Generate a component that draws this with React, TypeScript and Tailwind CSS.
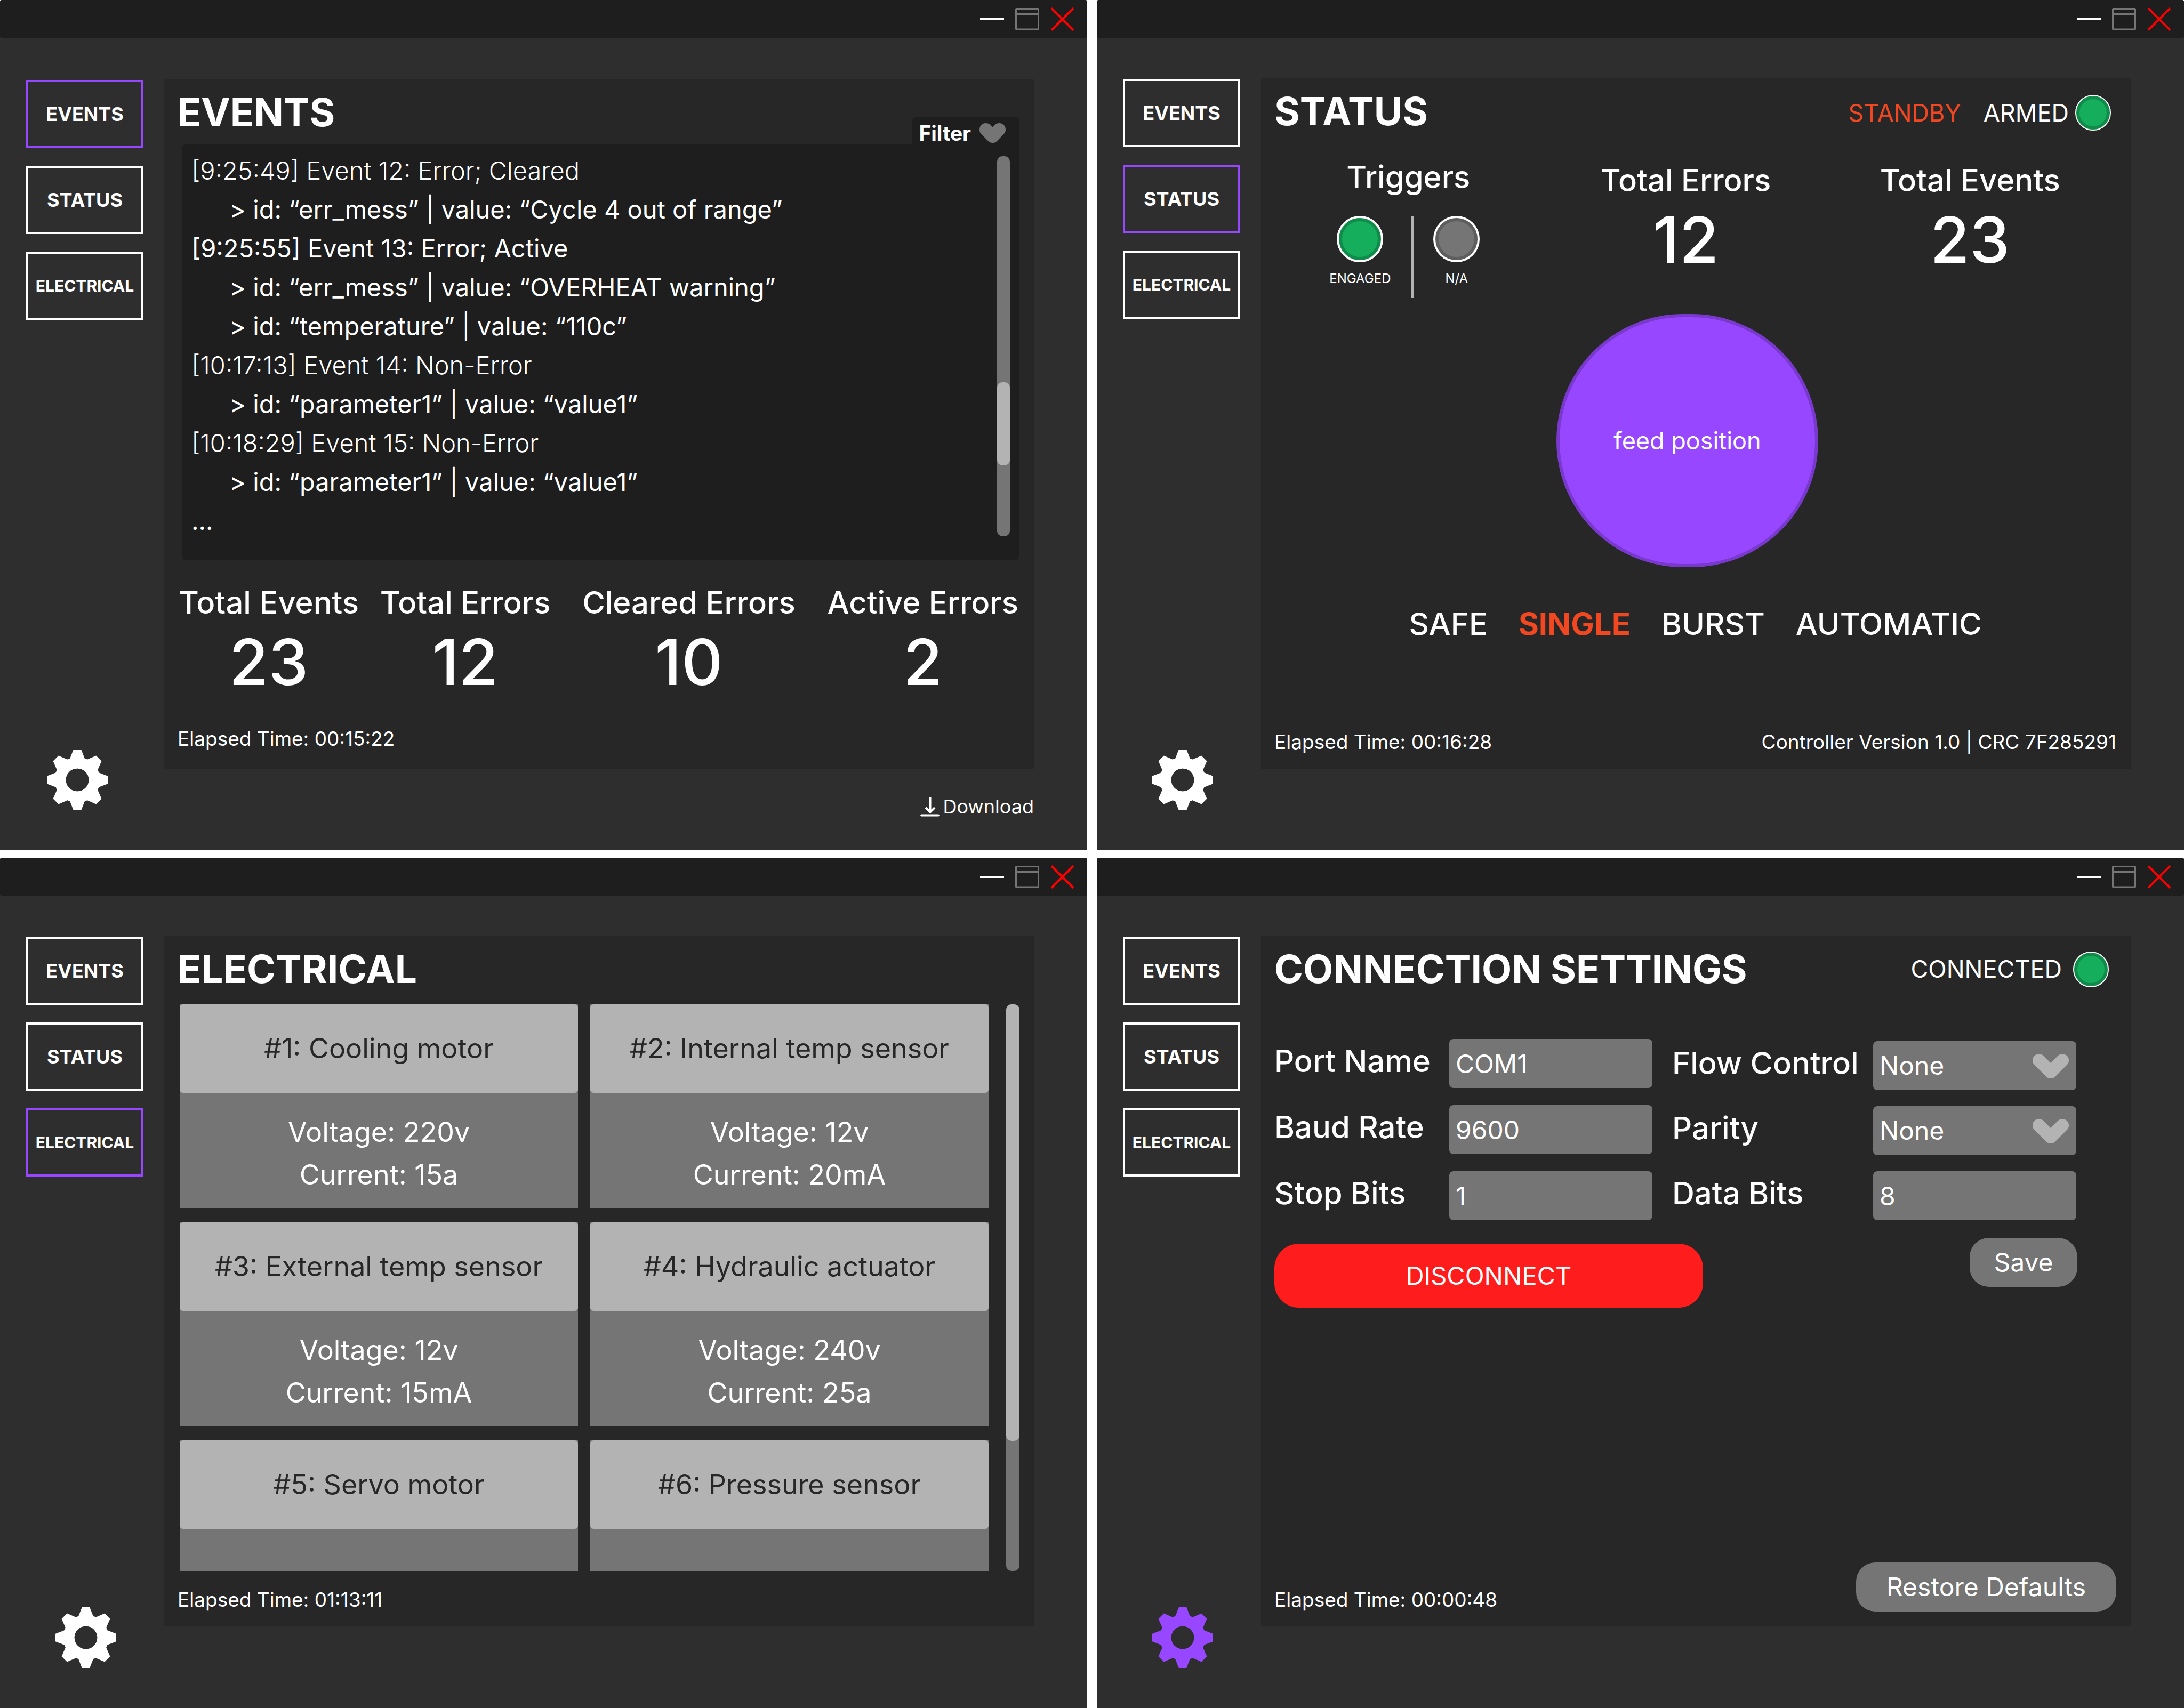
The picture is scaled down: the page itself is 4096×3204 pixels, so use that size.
import type { ReactNode } from "react";

const GEAR_TOOTH = "M-18.5 -52 L-9.5 -75 H9.5 L18.5 -52 L0 -30 Z";
const GEAR_ANGLES = [0, 45, 90, 135, 180, 225, 270, 315];

function GearIcon() {
  return (
    <svg viewBox="-75 -75 150 150" className="size-[114px]" fill="currentColor" aria-hidden="true">
      {GEAR_ANGLES.map((angle) => (
        <path key={angle} d={GEAR_TOOTH} transform={`rotate(${angle})`} />
      ))}
      <circle r="42" fill="none" stroke="currentColor" strokeWidth="28" />
      <circle r="28" className="fill-[#2e2e2e]" />
    </svg>
  );
}

function WindowControls() {
  return (
    <div className="flex items-center gap-[21px] pr-6">
      <button type="button" aria-label="Minimize" className="text-white">
        <svg viewBox="0 0 45 44" className="h-11 w-[45px]" aria-hidden="true">
          <rect y="20" width="45" height="4" fill="currentColor" />
        </svg>
      </button>
      <button type="button" aria-label="Maximize" className="text-[#757575]">
        <svg viewBox="0 0 45 44" className="h-11 w-[45px]" fill="none" stroke="currentColor" strokeWidth="3" aria-hidden="true">
          <rect x="1.5" y="2.5" width="42" height="38.5" rx="1" />
          <path d="M1.5 12.5H43.5" />
        </svg>
      </button>
      <button type="button" aria-label="Close" className="text-[#ff0000]">
        <svg viewBox="0 0 45 44" className="h-11 w-[45px]" fill="none" stroke="currentColor" strokeWidth="4" aria-hidden="true">
          <path d="M2 1.5L43 42.5M43 1.5L2 42.5" />
        </svg>
      </button>
    </div>
  );
}

const NAV = [
  { label: "EVENTS", size: "text-[36px]" },
  { label: "STATUS", size: "text-[36px]" },
  { label: "ELECTRICAL", size: "text-[30px]" },
];

type WindowProps = {
  active: string;
  bodyClass?: string;
  gearClass?: string;
  footer?: ReactNode;
  children: ReactNode;
};

function AppWindow({
  active,
  bodyClass = "pt-[76px]",
  gearClass = "ml-[55px] text-white",
  footer,
  children,
}: WindowProps) {
  return (
    <section className="flex flex-col rounded-t-[4px] bg-[#2e2e2e]">
      <header className="flex h-[71px] shrink-0 items-center justify-end rounded-[4px] bg-[#1e1e1e]">
        <WindowControls />
      </header>
      <div className={`flex flex-1 gap-[39px] pr-[100px] pl-[49px] ${bodyClass}`}>
        <nav className="flex w-[220px] shrink-0 flex-col gap-[33px] pt-px pb-[75px]">
          {NAV.map((item) => (
            <button
              key={item.label}
              type="button"
              className={`h-32 border-4 font-bold ${item.size} ${
                item.label === active ? "border-[#9747ff]" : "border-white"
              }`}
            >
              {item.label}
            </button>
          ))}
          <button type="button" aria-label="Settings" className={`mt-auto self-start ${gearClass}`}>
            <GearIcon />
          </button>
        </nav>
        <div className="flex min-w-0 flex-1 flex-col">
          <main className="flex flex-1 flex-col bg-[#272727] pr-[27px] pl-[25px]">{children}</main>
          <div className="h-[153px]">{footer}</div>
        </div>
      </div>
    </section>
  );
}

function Heading({ children }: { children: ReactNode }) {
  return <h1 className="text-[73px] leading-[88px] font-bold">{children}</h1>;
}

function Elapsed({ time }: { time: string }) {
  return <p className="text-[37px] leading-[44px]">Elapsed Time: {time}</p>;
}

function Chevron({ wide, className }: { wide?: boolean; className: string }) {
  return (
    <svg
      viewBox={wide ? "0 0 68 46" : "0 0 49 37"}
      fill="none"
      stroke="currentColor"
      strokeWidth="24"
      strokeLinecap="round"
      strokeLinejoin="round"
      className={className}
      aria-hidden="true"
    >
      <path d={wide ? "M12 12L34 34L56 12" : "M12 12L24.5 25L37 12"} />
    </svg>
  );
}

function Stat({ label, value, className = "" }: { label: string; value: number; className?: string }) {
  return (
    <div className={`flex flex-col items-center font-medium whitespace-nowrap ${className}`}>
      <h2 className="text-[58px] leading-[74px]">{label}</h2>
      <p className="text-[120px] leading-[150px]">{value}</p>
    </div>
  );
}

const LOG = [
  { title: "[9:25:49] Event 12: Error; Cleared", active: false, details: ["> id: “err_mess” | value: “Cycle 4 out of range”"] },
  {
    title: "[9:25:55] Event 13: Error; Active",
    active: true,
    details: ["> id: “err_mess” | value: “OVERHEAT warning”", "> id: “temperature” | value: “110c”"],
  },
  { title: "[10:17:13] Event 14: Non-Error", active: false, details: ["> id: “parameter1” | value: “value1”"] },
  { title: "[10:18:29] Event 15: Non-Error", active: false, details: ["> id: “parameter1” | value: “value1”"] },
];

function EventsWindow() {
  return (
    <AppWindow
      active="EVENTS"
      bodyClass="pt-[78px]"
      gearClass="ml-[39px] text-white"
      footer={
        <div className="flex justify-end pt-[49px]">
          <a href="#download" className="flex items-center gap-1.5 text-[36px] leading-[44px]">
            <svg viewBox="0 0 36 37" className="h-[37px] w-9" fill="none" stroke="currentColor" strokeWidth="4" aria-hidden="true">
              <path d="M18.5 0V28M10 20L18.5 28.5L27 20" />
              <path d="M2.2 34.5H33.8" strokeLinecap="round" />
            </svg>
            Download
          </a>
        </div>
      }
    >
      <div className="flex h-[122px] items-end justify-between">
        <div className="self-start pt-[18px]">
          <Heading>EVENTS</Heading>
        </div>
        <button
          type="button"
          className="flex h-[51px] items-center justify-between gap-4 rounded-t-[6px] bg-[#1e1e1e] pt-2 pr-[26px] pl-3 text-[39px] leading-[43px] font-bold"
        >
          Filter
          <Chevron className="h-[37px] w-[49px] text-[#757575]" />
        </button>
      </div>
      <div className="ml-2 flex h-[780px] justify-between rounded-[8px] rounded-tr-none bg-[#1e1e1e] px-[18px] pt-3">
        <ul className="text-[47px] leading-[73px]">
          {LOG.map((entry) => (
            <li key={entry.title}>
              <p className={entry.active ? "font-normal" : "font-light"}>{entry.title}</p>
              {entry.details.map((detail) => (
                <p key={detail} className="pl-[71px]">
                  {detail}
                </p>
              ))}
            </li>
          ))}
          <li>...</li>
        </ul>
        <div className="mt-2.5 h-[713px] w-6 rounded-[10px] bg-[#757575] pt-[424px]">
          <div className="h-[156px] rounded-[10px] bg-[#b3b3b3]" />
        </div>
      </div>
      <div className="mt-[42px] flex justify-between px-0.5">
        <Stat label="Total Events" value={23} />
        <Stat label="Total Errors" value={12} />
        <Stat label="Cleared Errors" value={10} className="px-5" />
        <Stat label="Active Errors" value={2} />
      </div>
      <div className="mt-auto pb-[34px]">
        <Elapsed time="00:15:22" />
      </div>
    </AppWindow>
  );
}

function Lamp({ color, size }: { color: "green" | "gray"; size: "sm" | "lg" }) {
  const outer = size === "sm" ? "size-[67px] border-2" : "size-[87px] border-4";
  const fill = color === "green" ? "border-[#108b4a] bg-[#14ae5c]" : "border-[#5e5e5e] bg-[#757575]";
  return (
    <span className={`block rounded-full border-white bg-white ${outer}`}>
      <span className={`block size-full rounded-full border-[6px] ${fill}`} />
    </span>
  );
}

function Trigger({ color, label }: { color: "green" | "gray"; label: string }) {
  return (
    <div className="flex w-[114px] flex-col items-center gap-4 text-[24px] leading-[30px]">
      <Lamp color={color} size="lg" />
      {label}
    </div>
  );
}

const MODES = ["SAFE", "SINGLE", "BURST", "AUTOMATIC"];

function StatusWindow() {
  return (
    <AppWindow active="STATUS">
      <div className="flex items-center justify-between pt-[18px] pr-2.5">
        <Heading>STATUS</Heading>
        <div className="flex items-center pt-[5px] text-[45px] leading-[56px]">
          <span className="mr-[42px] text-[#f24822]">STANDBY</span>
          <span className="mr-3">ARMED</span>
          <Lamp color="green" size="sm" />
        </div>
      </div>
      <div className="mt-[42px] grid grid-cols-[503fr_538fr_529fr] pr-2.5">
        <div className="flex flex-col items-center">
          <h2 className="text-[58px] leading-[74px] font-medium">Triggers</h2>
          <div className="mt-9 flex">
            <Trigger color="green" label="ENGAGED" />
            <div className="mr-6 ml-[39px] h-[154px] w-1 bg-[#b3b3b3]" />
            <Trigger color="gray" label="N/A" />
          </div>
        </div>
        <Stat label="Total Errors" value={12} className="pt-1.5" />
        <Stat label="Total Events" value={23} className="pt-1.5" />
      </div>
      <div className="mt-[30px] flex justify-center pr-[30px]">
        <div className="flex h-[475px] w-[491px] items-center justify-center rounded-full border-[6px] border-[#7939cc] bg-[#9747ff] text-[45px]">
          feed position
        </div>
      </div>
      <div className="mt-[69px] flex justify-center gap-[58px] text-[58px] leading-[74px]">
        {MODES.map((mode) => (
          <button key={mode} type="button" className={mode === "SINGLE" ? "font-bold text-[#f24822]" : "font-medium"}>
            {mode}
          </button>
        ))}
      </div>
      <div className="mt-auto flex justify-between pb-7">
        <Elapsed time="00:16:28" />
        <p className="text-[37px] leading-[44px]">Controller Version 1.0 | CRC 7F285291</p>
      </div>
    </AppWindow>
  );
}

const DEVICES = [
  { name: "#1: Cooling motor", voltage: "220v", current: "15a" },
  { name: "#2: Internal temp sensor", voltage: "12v", current: "20mA" },
  { name: "#3: External temp sensor", voltage: "12v", current: "15mA" },
  { name: "#4: Hydraulic actuator", voltage: "240v", current: "25a" },
  { name: "#5: Servo motor" },
  { name: "#6: Pressure sensor" },
];

function ElectricalWindow() {
  return (
    <AppWindow active="ELECTRICAL">
      <div className="pt-[18px]">
        <Heading>ELECTRICAL</Heading>
      </div>
      <div className="mt-[22px] ml-1 flex h-[1063px] gap-[33px] overflow-hidden">
        <div className="grid flex-1 auto-rows-[382px] grid-cols-2 gap-x-[23px] gap-y-[27px] text-center text-[52px] leading-[80px]">
          {DEVICES.map((device) => (
            <article key={device.name} className="bg-[#757575]">
              <h2 className="rounded-[6px] bg-[#b3b3b3] py-[43px] text-[#272727]">{device.name}</h2>
              {device.voltage && (
                <div className="pt-[34px]">
                  <p>Voltage: {device.voltage}</p>
                  <p>Current: {device.current}</p>
                </div>
              )}
            </article>
          ))}
        </div>
        <div className="w-[25px] rounded-[10px] bg-[#757575]">
          <div className="h-[819px] rounded-[10px] bg-[#b3b3b3]" />
        </div>
      </div>
      <div className="mt-auto pb-7">
        <Elapsed time="01:13:11" />
      </div>
    </AppWindow>
  );
}

type FieldProps = { id: string; label: string; value: string; select?: boolean; labelClass: string };

function Field({ id, label, value, select, labelClass }: FieldProps) {
  const box = "h-[92px] w-[381px] appearance-none rounded-[8px] bg-[#757575] px-3 text-[48px] text-white";
  return (
    <div className="flex items-center">
      <label htmlFor={id} className={`pb-2.5 text-[58px] leading-[74px] font-medium whitespace-nowrap ${labelClass}`}>
        {label}
      </label>
      {select ? (
        <div className="relative">
          <select id={id} defaultValue={value} className={box}>
            <option>{value}</option>
          </select>
          <Chevron wide className="pointer-events-none absolute top-6 right-3.5 h-[46px] w-[68px] text-[#b3b3b3]" />
        </div>
      ) : (
        <input id={id} type="text" defaultValue={value} className={box} />
      )}
    </div>
  );
}

function ConnectionWindow() {
  return (
    <AppWindow active="" gearClass="ml-[55px] text-[#9747ff]">
      <div className="flex items-center justify-between pt-[18px] pr-3.5">
        <Heading>CONNECTION SETTINGS</Heading>
        <div className="flex items-center gap-[21px] text-[45px] leading-[56px]">
          CONNECTED
          <Lamp color="green" size="sm" />
        </div>
      </div>
      <form className="mt-[87px]">
        <div className="flex gap-[37px]">
          <div className="flex flex-col gap-8">
            <Field id="port" label="Port Name" value="COM1" labelClass="w-[328px]" />
            <Field id="baud" label="Baud Rate" value="9600" labelClass="w-[328px]" />
            <Field id="stop" label="Stop Bits" value="1" labelClass="w-[328px]" />
          </div>
          <div className="flex flex-col gap-[30px] pt-1">
            <Field id="flow" label="Flow Control" value="None" select labelClass="w-[377px]" />
            <Field id="parity" label="Parity" value="None" select labelClass="w-[377px]" />
            <Field id="data" label="Data Bits" value="8" labelClass="w-[377px]" />
          </div>
        </div>
        <div className="mt-[33px] flex items-start justify-between pr-[73px] leading-[60px]">
          <button type="button" className="mt-[11px] w-[804px] rounded-[46px] bg-[#ff1c1c] py-[30px] text-[47px]">
            DISCONNECT
          </button>
          <button type="button" className="w-[202px] rounded-[36px] bg-[#757575] py-4 text-[48px]">
            Save
          </button>
        </div>
      </form>
      <div className="mt-auto flex items-end justify-between pb-7">
        <Elapsed time="00:00:48" />
        <button type="button" className="w-[488px] rounded-[36px] bg-[#757575] py-4 text-[48px] leading-[60px]">
          Restore Defaults
        </button>
      </div>
    </AppWindow>
  );
}

export default function App() {
  return (
    <div className="grid min-h-screen grid-cols-2 grid-rows-2 gap-x-[18px] gap-y-3.5 bg-white font-['Inter',sans-serif] text-white">
      <EventsWindow />
      <StatusWindow />
      <ElectricalWindow />
      <ConnectionWindow />
    </div>
  );
}
